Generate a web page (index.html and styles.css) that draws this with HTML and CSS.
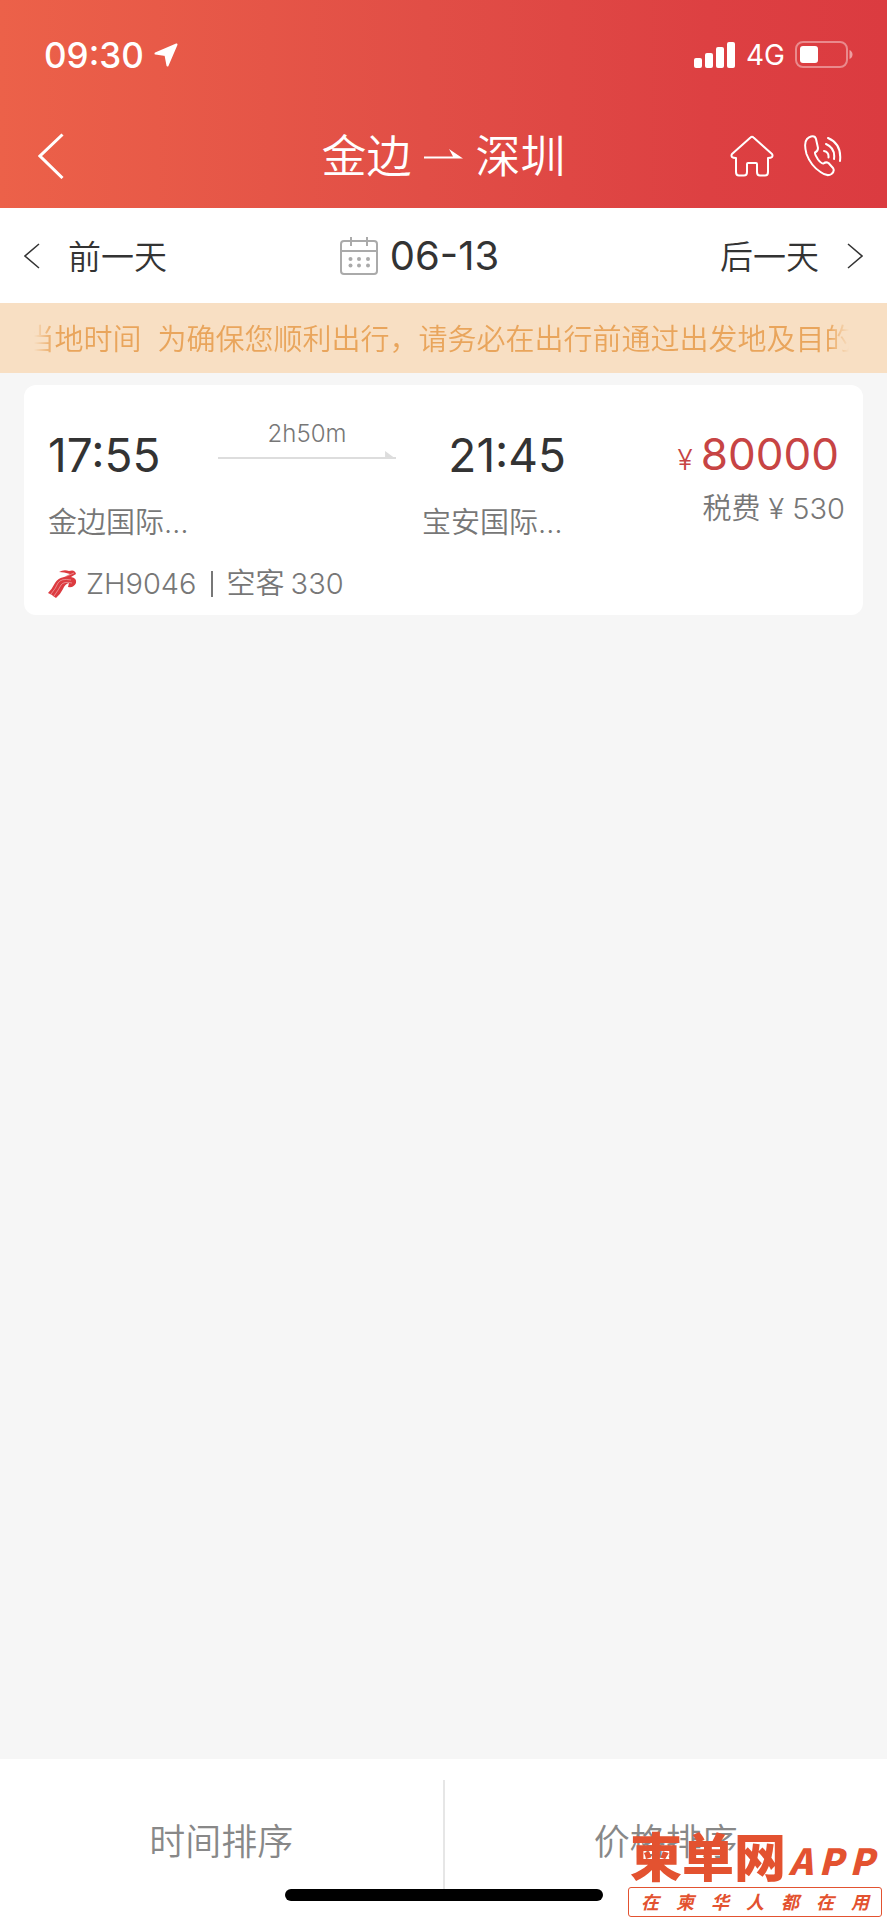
FILE: index.html
```html
<!DOCTYPE html>
<html lang="zh-CN">
<head>
<meta charset="UTF-8">
<meta name="viewport" content="width=device-width, initial-scale=1.0">
<title>金边 - 深圳</title>
<link rel="stylesheet" href="styles.css">
</head>
<body>

<header class="header">
  <!-- Status bar -->
  <div class="status-bar">
    <div class="status-left">
      <span class="clock">09:30</span>
      <svg width="24" height="24" viewBox="0 0 24 24" fill="#fff" stroke="#fff" stroke-width="2" stroke-linejoin="round"><path d="M22.5 1.5L1.5 10.5L11.5 12L13.5 22.5Z"/></svg>
    </div>
    <div class="status-right">
      <svg width="42" height="26" viewBox="0 0 42 26" fill="#fff">
        <rect x="0" y="16" width="8" height="10" rx="2"/>
        <rect x="11" y="11" width="8" height="15" rx="2"/>
        <rect x="22" y="5" width="8" height="21" rx="2"/>
        <rect x="33" y="0" width="8" height="26" rx="2"/>
      </svg>
      <span class="network">4G</span>
      <svg width="58" height="28" viewBox="0 0 58 28">
        <rect x="1" y="1" width="51" height="25" rx="7" fill="none" stroke="#fff" stroke-opacity=".4" stroke-width="2"/>
        <rect x="5" y="5" width="18" height="17" rx="3" fill="#fff"/>
        <path d="M54.5 9Q57.5 10.5 57.5 13.5T54.5 18Z" fill="#fff" fill-opacity=".5"/>
      </svg>
    </div>
  </div>

  <!-- Route title -->
  <nav class="nav">
    <button type="button" class="back" aria-label="返回">
      <svg width="26" height="46" viewBox="0 0 26 46" fill="none" stroke="#fff" stroke-width="3"><path d="M24.5 1.5L2 23L24.5 45"/></svg>
    </button>
    <h1 class="title">
      <span>金边</span>
      <svg width="40" height="12" viewBox="0 0 40 12" fill="#fff"><path d="M0 8.5H29L25 1L39 10.5H0Z"/></svg>
      <span>深圳</span>
    </h1>
    <div class="actions">
      <a href="#" aria-label="首页">
        <svg width="44" height="42" viewBox="0 0 44 42" fill="none" stroke="#fff" stroke-width="2" stroke-linejoin="round"><path d="M20.5 2.5Q22 1 23.5 2.5L42 19Q43 20.5 42 22Q41 23 38 23V37Q38 40.5 35 40.5H30Q27 40.5 27 37V29Q27 28 26 28H18Q17 28 17 29V37Q17 40.5 14 40.5H9Q6 40.5 6 37V23Q3 23 2 22Q1 20.5 2 19Z"/></svg>
      </a>
      <a href="#" aria-label="电话">
        <svg width="38" height="42" viewBox="0 0 38 42" fill="none" stroke="#fff" stroke-width="2" stroke-linecap="round" stroke-linejoin="round">
          <path d="M7 1.5Q11 .5 12 4L14 13Q14 16 11 17.5Q10.5 19 14 24.5Q17 28.5 19.5 28.5Q22 26.5 24.5 28L29 33Q31 36 27.5 39Q23 42 16.5 37Q7 31 2.5 19Q-.5 8 3 4Q5 2 7 1.5Z"/>
          <path d="M20 16Q25 17 24.5 22.5M22 9Q31.5 13 30 24M24 3Q38 9 36 26"/>
        </svg>
      </a>
    </div>
  </nav>
</header>

<!-- Date switch -->
<div class="date-bar">
  <button type="button" class="day">
    <svg width="16" height="26" viewBox="0 0 16 26" fill="none" stroke="#333" stroke-width="1.5"><path d="M15 1L1 13L15 25"/></svg>
    <span>前一天</span>
  </button>
  <button type="button" class="date">
    <svg width="38" height="38" viewBox="0 0 38 38" fill="none" stroke="#aaa" stroke-width="2">
      <rect x="1" y="4" width="36" height="33" rx="3"/>
      <path d="M1 14H37M11 0V9M27 0V9"/>
      <g fill="#aaa" stroke="none">
        <circle cx="10.5" cy="22" r="2"/><circle cx="19" cy="22" r="2"/><circle cx="28" cy="22" r="2"/>
        <circle cx="10.5" cy="28.5" r="2"/><circle cx="19" cy="28.5" r="2"/><circle cx="28" cy="28.5" r="2"/>
      </g>
    </svg>
    <span>06-13</span>
  </button>
  <button type="button" class="day day-next">
    <span>后一天</span>
    <svg width="16" height="26" viewBox="0 0 16 26" fill="none" stroke="#333" stroke-width="1.5"><path d="M1 1L15 13L1 25"/></svg>
  </button>
</div>

<!-- Scrolling notice -->
<div class="notice">
  <p class="notice-text"><span>当地时间</span><span>为确保您顺利出行，请务必在出行前通过出发地及目的</span></p>
</div>

<!-- Flight list -->
<main class="list">
  <article class="flight">
    <div class="flight-main">
      <div class="route">
        <div class="place">
          <div class="time">17:55</div>
          <div class="airport">金边国际…</div>
        </div>
        <div class="duration">
          <span>2h50m</span>
          <svg width="100%" height="8" aria-hidden="true">
            <rect x="0" y="6" width="100%" height="2" fill="#ddd"/>
            <svg x="100%" width="12" height="8" overflow="visible"><path d="M-11 0L0 8H-11Z" fill="#ddd"/></svg>
          </svg>
        </div>
        <div class="place place-arrive">
          <div class="time">21:45</div>
          <div class="airport">宝安国际…</div>
        </div>
      </div>
      <div class="fare">
        <div class="price"><span class="currency">¥</span>80000</div>
        <div class="tax"><span>税费</span><span>¥</span><span>530</span></div>
      </div>
    </div>
    <div class="plane">
      <svg width="30" height="30" viewBox="0 0 30 30">
        <path d="M11 3Q16 0 21 2Q27 0 28 5L23 8Q29 9 28 14Q26 19 20 18L21 14Q17 15 15 20Q12 26 8 29L5 27L4 26L0 24Q4 20 7 14Q10 9 16 8L22 5Q16 3 11 3Z" fill="#dc3b40"/>
        <path d="M3 25Q8 19 10 14Q13 9 23 11M6 27Q11 20 13 16Q16 12 24 14M13 8Q18 8 26 4" fill="none" stroke="#fff" stroke-opacity=".4"/>
      </svg>
      <span class="code">ZH9046</span>
      <span class="bar"></span>
      <span class="model"><span>空客</span><span>330</span></span>
    </div>
  </article>
</main>

<!-- Sort tabs -->
<footer class="sort">
  <button type="button" class="sort-button">时间排序</button>
  <button type="button" class="sort-button">价格排序</button>
</footer>

<div class="home-indicator"></div>

<!-- App badge over the bottom corner -->
<div class="badge">
  <div class="badge-name"><strong>柬单网</strong><em><span>A</span><span>P</span><span>P</span></em></div>
  <div class="badge-slogan"><span>在</span><span>柬</span><span>华</span><span>人</span><span>都</span><span>在</span><span>用</span></div>
</div>

</body>
</html>
```
FILE: styles.css
```css
* {
  box-sizing: border-box;
}
body {
  font-family: Inter, "Noto Sans CJK SC", sans-serif;
  font-weight: 350;
  margin: 0;
  display: flex;
  flex-direction: column;
  min-height: 100vh;
  position: relative;
  background-color: #f6f6f6;
  color: #333;
}
button {
  font: inherit;
  color: inherit;
  background: none;
  border: none;
  padding: 0;
  cursor: pointer;
}
svg {
  display: block;
  flex-shrink: 0;
}

/* Header */
.header {
  background: linear-gradient(90deg, #ec6149 0%, #e14e46 48%, #dd4042 80%, #db3b40 100%);
  color: #fff;
}
.status-bar {
  display: flex;
  justify-content: space-between;
  align-items: center;
  height: 104px;
  padding: 6px 34px 0 44px;
}
.status-left {
  display: flex;
  align-items: center;
  gap: 10px;
}
.status-right {
  display: flex;
  align-items: center;
  gap: 10px;
}
.clock {
  font-size: 35px;
  font-weight: 500;
}
.network {
  font-size: 28px;
  font-weight: 400;
}
.nav {
  display: grid;
  grid-template-columns: 1fr auto 1fr;
  align-items: center;
  height: 104px;
  padding: 0 38px;
}
.back {
  justify-self: start;
}
.title {
  display: flex;
  align-items: center;
  gap: 12px;
  margin: 0;
  padding-bottom: 5px;
  font-size: 45px;
  font-weight: 350;
}
.actions {
  display: flex;
  justify-content: flex-end;
  align-items: center;
  gap: 30px;
  padding-right: 7px;
}

/* Date switch */
.date-bar {
  display: grid;
  grid-template-columns: 1fr auto 1fr;
  align-items: center;
  height: 95px;
  padding: 0 24px;
  background-color: #fff;
}
.day {
  display: flex;
  align-items: center;
  gap: 28px;
  font-size: 33px;
}
.day span {
  padding-bottom: 2px;
}
.day-next {
  justify-self: end;
}
.date {
  display: flex;
  align-items: center;
  gap: 12px;
  margin-right: 48px;
  font-size: 40px;
  font-weight: 400;
}

/* Notice */
.notice {
  height: 70px;
  padding: 3px 38px 0 30px;
  background-color: #f8dfc3;
  color: #e9a55c;
}
.notice-text {
  display: flex;
  justify-content: center;
  gap: 16px;
  margin: 0;
  overflow: hidden;
  font-size: 29px;
  line-height: 67px;
  white-space: nowrap;
  -webkit-mask-image: linear-gradient(90deg, transparent 4px, #000 24px, #000 calc(100% - 20px), transparent);
  mask-image: linear-gradient(90deg, transparent 4px, #000 24px, #000 calc(100% - 20px), transparent);
}

/* Flight list */
.list {
  flex-grow: 1;
  padding: 12px 24px;
}
.flight {
  padding: 32px 18px 0 24px;
  border-radius: 12px;
  background-color: #fff;
}
.flight-main {
  display: flex;
  justify-content: space-between;
}
.route {
  display: flex;
  gap: 26px;
  width: 65%;
}
.place {
  min-width: 144px;
}
.time {
  font-size: 46px;
  font-weight: 400;
  line-height: 76px;
}
.airport {
  font-size: 29px;
  line-height: 60px;
  white-space: nowrap;
  color: #777;
}
.place-arrive .time {
  text-align: right;
}
.duration {
  flex-grow: 1;
  text-align: center;
  font-size: 24px;
  line-height: 34px;
  color: #777;
}
.fare {
  text-align: right;
}
.price {
  padding-right: 6px;
  font-size: 44px;
  font-weight: 400;
  line-height: 74px;
  color: #c74444;
}
.currency {
  margin-right: 8px;
  font-size: 28px;
  font-weight: 350;
}
.tax {
  display: flex;
  justify-content: flex-end;
  gap: 8px;
  font-size: 29px;
  line-height: 24px;
  color: #777;
}
.plane {
  display: flex;
  align-items: center;
  gap: 8px;
  font-size: 29px;
  line-height: 62px;
  color: #777;
}
.bar {
  width: 2px;
  height: 26px;
  margin: 0 6px;
  background-color: #777;
}
.model {
  display: flex;
  gap: 6px;
}

/* Sort tabs */
.sort {
  display: flex;
  height: 161px;
  padding-top: 21px;
  background-color: #fff;
}
.sort-button {
  flex: 1;
  height: 110px;
  padding-top: 8px;
  font-size: 36px;
  color: #888;
}
.sort-button + .sort-button {
  border-left: 2px solid #e6e6e6;
}
.home-indicator {
  position: absolute;
  left: 50%;
  bottom: 19px;
  width: 318px;
  height: 12px;
  margin-left: -159px;
  border-radius: 6px;
  background-color: #000;
}

/* Badge */
.badge {
  position: absolute;
  right: 5px;
  bottom: 3px;
  width: 254px;
  color: #e35230;
}
.badge-name {
  display: flex;
  align-items: center;
  justify-content: space-between;
  padding: 0 8px 0 2px;
  line-height: 56px;
}
.badge-name strong {
  font-size: 52px;
  font-weight: 900;
}
.badge-name em {
  display: flex;
  gap: 6px;
  font-family: "Noto Sans CJK SC", sans-serif;
  font-size: 36px;
  font-weight: 900;
}
.badge-slogan {
  display: flex;
  justify-content: space-between;
  padding: 2px 12px 0;
  border: 1px solid #e35230;
  border-radius: 3px;
  font-size: 18px;
  font-style: italic;
  font-weight: 700;
  line-height: 26px;
}
```
